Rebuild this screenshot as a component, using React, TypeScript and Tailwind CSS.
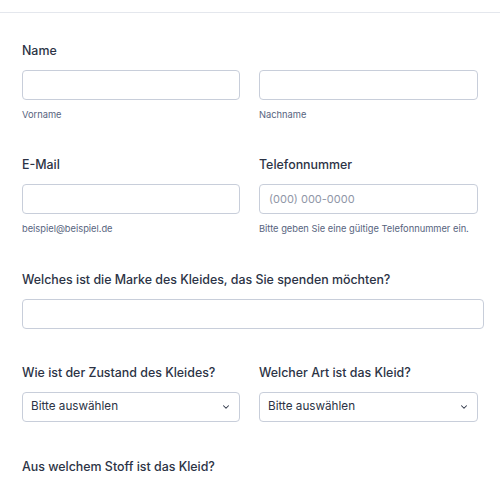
import { ChevronDown } from "lucide-react";

function Label({ children }: { children: React.ReactNode }) {
  return (
    <div className="h-5 text-[12.4px] leading-5 font-medium text-[#2c3345] mb-[9px] whitespace-nowrap">
      {children}
    </div>
  );
}

function TextInput({ placeholder }: { placeholder?: string }) {
  return (
    <input
      className="block w-full h-[30px] rounded-[4px] border border-[#c8ceda] bg-white px-[9px] text-[11px] text-[#2c3345] placeholder:text-[#8f96a7] outline-none"
      placeholder={placeholder}
    />
  );
}

function Sub({ children }: { children: React.ReactNode }) {
  return (
    <div className="mt-[8px] text-[9.3px] leading-[14px] text-[#57647e] whitespace-nowrap">
      {children}
    </div>
  );
}

function Select() {
  return (
    <div className="flex items-center justify-between h-[30px] rounded-[4px] border border-[#c8ceda] bg-white pl-[8px] pr-[8px] text-[11.7px] text-[#2c3345]">
      <span>Bitte auswählen</span>
      <ChevronDown size={10} strokeWidth={2.5} className="text-[#2c3345]" />
    </div>
  );
}

export default function App() {
  return (
    <div
      className="w-[500px] h-[484px] overflow-hidden bg-white"
      style={{ fontFamily: "Inter, 'Noto Sans', sans-serif" }}
    >
      <div className="h-[13px] border-b border-[#e4e7ed]" />

      <div className="pl-[22px] pr-[16px] pt-[28px]">
        {/* Name */}
        <div className="pb-[33px]">
          <Label>Name</Label>
          <div className="grid grid-cols-[218px_219px] gap-x-[19px]">
            <div>
              <TextInput />
              <Sub>Vorname</Sub>
            </div>
            <div>
              <TextInput />
              <Sub>Nachname</Sub>
            </div>
          </div>
        </div>

        {/* E-Mail / Telefon */}
        <div className="grid grid-cols-[218px_219px] gap-x-[19px] pb-[34px]">
          <div>
            <Label>E-Mail</Label>
            <TextInput />
            <Sub>beispiel@beispiel.de</Sub>
          </div>
          <div>
            <Label>Telefonnummer</Label>
            <TextInput placeholder="(000) 000-0000" />
            <Sub>Bitte geben Sie eine gültige Telefonnummer ein.</Sub>
          </div>
        </div>

        {/* Marke */}
        <div className="pb-[34px]">
          <Label>Welches ist die Marke des Kleides, das Sie spenden möchten?</Label>
          <TextInput />
        </div>

        {/* Zustand / Art */}
        <div className="grid grid-cols-[218px_219px] gap-x-[19px] pb-[35px]">
          <div>
            <Label>Wie ist der Zustand des Kleides?</Label>
            <Select />
          </div>
          <div>
            <Label>Welcher Art ist das Kleid?</Label>
            <Select />
          </div>
        </div>

        <Label>Aus welchem Stoff ist das Kleid?</Label>
      </div>
    </div>
  );
}
